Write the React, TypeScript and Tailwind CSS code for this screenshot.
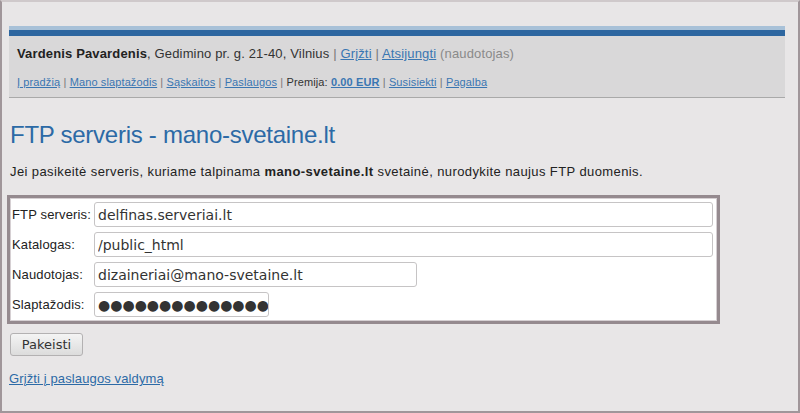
import React from 'react';

const sans = { fontFamily: '"Liberation Sans", Arial, sans-serif' };

function Sep() {
  return <span className="text-[#777]"> | </span>;
}

function NavLink({ children, bold }: { children: React.ReactNode; bold?: boolean }) {
  return (
    <a href="#" className={`text-[#3a76b2] underline ${bold ? 'font-bold' : ''}`}>
      {children}
    </a>
  );
}

export default function App() {
  return (
    <div
      className="w-[800px] h-[413px] overflow-hidden bg-[#e8e6e7] border-2 border-[#a0969a] border-t-[#cfc9cb] text-[#222]"
      style={sans}
    >
      {/* header */}
      <div className="mt-[24px] ml-[7px] mr-[13px]">
        <div className="h-[4px] bg-[#a8c1d8]" />
        <div className="h-[6px] bg-[#2d66a0]" />
        <div className="h-[62px] bg-[#d9d8d9] border-b border-[#a9a9a9] px-[8px]">
          <div className="pt-[10px] text-[13px] leading-[16px] tracking-[0.15px] text-[#333]">
            <b className="text-[#222]">Vardenis Pavardenis</b>, Gedimino pr. g. 21-40, Vilnius
            <Sep />
            <NavLink>Grįžti</NavLink>
            <Sep />
            <NavLink>Atsijungti</NavLink> <span className="text-[#8a8a8a]">(naudotojas)</span>
          </div>
          <div className="mt-[14px] text-[11px] leading-[13px] tracking-[0.12px] text-[#333]">
            <NavLink>Į pradžią</NavLink>
            <Sep />
            <NavLink>Mano slaptažodis</NavLink>
            <Sep />
            <NavLink>Sąskaitos</NavLink>
            <Sep />
            <NavLink>Paslaugos</NavLink>
            <Sep />
            Premija: <NavLink bold>0.00 EUR</NavLink>
            <Sep />
            <NavLink>Susisiekti</NavLink>
            <Sep />
            <NavLink>Pagalba</NavLink>
          </div>
        </div>
      </div>

      <div className="pl-[8px]">
        <h1 className="mt-[23px] text-[24px] leading-[28px] tracking-[-0.26px] text-[#2c6aa6]">
          FTP serveris - mano-svetaine.lt
        </h1>
        <p className="mt-[15px] text-[13px] leading-[16px] tracking-[0.4px] text-[#222]">
          Jei pasikeitė serveris, kuriame talpinama <b>mano-svetaine.lt</b> svetainė, nurodykite naujus FTP
          duomenis.
        </p>

        {/* form */}
        <div className="mt-[15px] ml-[-3px] w-[713px] bg-white border-[3px] border-[#958a8f] shadow-[inset_0_0_0_1px_#d6d0d3] pt-[4px] pb-[4px] pl-[2px] pr-[4px] flex flex-col gap-[5px]">
          <Row label="FTP serveris:" value="delfinas.serveriai.lt" width="flex-1" />
          <Row label="Katalogas:" value="/public_html" width="flex-1" />
          <Row label="Naudotojas:" value="dizaineriai@mano-svetaine.lt" width="w-[323px]" />
          <Row label="Slaptažodis:" value="●●●●●●●●●●●●●●●" width="w-[175px]" />
        </div>

        <button
          className="mt-[9px] w-[73px] h-[23px] rounded-[3px] border border-[#b3b1b2] bg-gradient-to-b from-[#f4f4f4] to-[#dcdcdc] text-[13px] text-[#333]"
          style={{ fontFamily: '"DejaVu Sans", sans-serif' }}
        >
          Pakeisti
        </button>

        <div className="mt-[15px] ml-[-1px] text-[13px] leading-[16px] tracking-[0.12px]">
          <a href="#" className="text-[#2c6aa6] underline">
            Grįžti į paslaugos valdymą
          </a>
        </div>
      </div>
    </div>
  );
}

function Row({ label, value, width }: { label: string; value: string; width: string }) {
  return (
    <div className="flex items-center h-[25px]">
      <label className="w-[82px] shrink-0 text-[13px] tracking-[0.15px] text-[#222]">{label}</label>
      <input
        readOnly
        value={value}
        className={`${width} h-[25px] border border-[#c6c4c5] rounded-[3px] bg-white pl-[3px] pr-0 text-[14px] text-[#333] outline-none`}
        style={{ fontFamily: '"DejaVu Sans", sans-serif' }}
      />
    </div>
  );
}
